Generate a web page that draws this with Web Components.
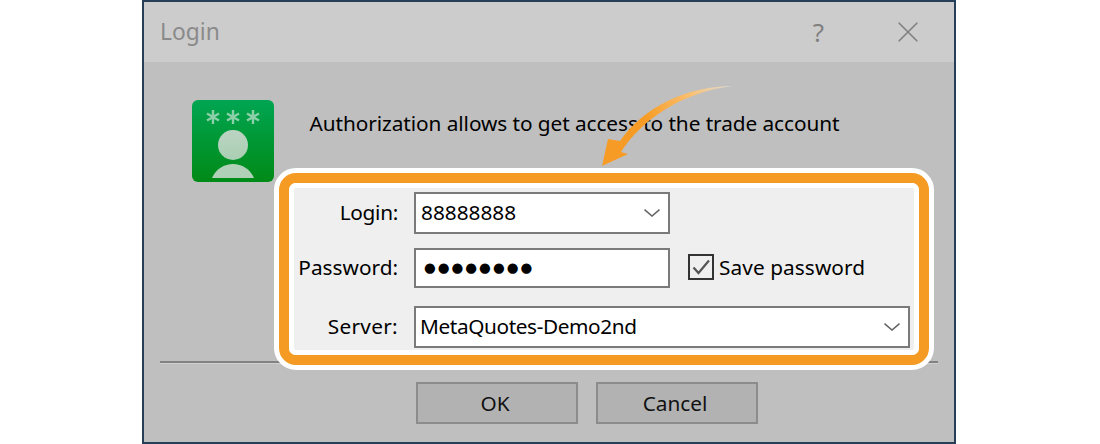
<!DOCTYPE html>
<html><head><meta charset="utf-8"><style>
html,body{margin:0;padding:0;background:#fff}
body{width:1100px;height:444px;overflow:hidden;padding-left:142px;box-sizing:border-box;font-family:"Noto Sans","Open Sans",sans-serif;font-size:20.8px;color:#000}
</style></head><body>
<login-dialog>
  <title-bar slot="title" caption="Login"></title-bar>
  <user-icon slot="icon"></user-icon>
  <span slot="message">Authorization allows to get access to the trade account</span>
  <callout-box slot="form">
    <field-row label="Login:" style="--ls:-.3px"><combo-box value="88888888" style="width:256px"></combo-box></field-row>
    <field-row label="Password:" style="margin-top:14px"><password-box count="8"></password-box><check-field>Save password</check-field></field-row>
    <field-row label="Server:" style="margin-top:18px;--ls:.3px"><combo-box value="MetaQuotes-Demo2nd" tight style="width:496px"></combo-box></field-row>
  </callout-box>
  <dlg-button slot="buttons">OK</dlg-button>
  <dlg-button slot="buttons">Cancel</dlg-button>
</login-dialog>
<script>
function def(name, html, init){
  customElements.define(name, class extends HTMLElement{
    connectedCallback(){
      if(this.shadowRoot) return;
      const r=this.attachShadow({mode:'open'});
      r.innerHTML=html;
      if(init) init(this,r);
    }
  });
}
const chev='<svg width="16" height="8" viewBox="0 0 16 8" style="display:block"><path d="M.5.7 8 7 15.500.7" fill="none" stroke="#666" stroke-width="1.6"/></svg>';
def('login-dialog',`<style>
:host{display:block;position:relative;width:814px;height:444px;box-sizing:border-box;border:2px solid #243f57;background:#bfbfbf}
.top{display:flex;padding:38px 0 0 48px;gap:35.500px;height:82px}
.msg{line-height:46px;height:46px;letter-spacing:-.07px}
.form{display:block;margin:-14px 0 -9px 130px;position:relative;z-index:1;width:660px}
.rule{margin:0 16px 0 16px;height:2px;background:#828282;border-bottom:1px solid #cfcfcf}
.btns{display:flex;gap:18px;margin:18px 0 0 272px}
.arrow{position:absolute;left:456px;top:78px;z-index:2;display:block}
</style>
<slot name="title"></slot>
<div class="top"><slot name="icon"></slot><div class="msg"><slot name="message"></slot></div></div>
<div class="form"><slot name="form"></slot></div>
<div class="rule"></div>
<div class="btns"><slot name="buttons"></slot></div>
<svg class="arrow" width="140" height="90" viewBox="600 80 140 90">
<defs><linearGradient id="ag" gradientUnits="userSpaceOnUse" x1="645" y1="118" x2="733" y2="86"><stop offset="0" stop-color="#f69c26"/><stop offset=".55" stop-color="#fac070"/><stop offset="1" stop-color="#f5e6cf" stop-opacity=".6"/></linearGradient></defs>
<path d="M733 86C690 86 645 105 620 141L608 139 602 166 628 154 621 152C640 122 680 92 733 86Z" fill="url(#ag)"/>
</svg>`);
def('title-bar',`<style>
:host{display:flex;align-items:center;height:60px;background:#ccc;color:#8a8a8a;padding-left:16px;box-sizing:border-box}
.c{flex:1;font-size:22.8px;line-height:60px;height:60px}
.q{font-size:26px;line-height:1;color:#808080;margin-right:74px}
svg{display:block;margin-right:36px}
</style><div class="c"></div><div class="q">?</div><svg width="20" height="20" viewBox="0 0 20 20"><path d="M.7.7 19.3 19.3M19.3.7.7 19.3" stroke="#808080" stroke-width="1.6" fill="none"/></svg>`,
(h,r)=>{r.querySelector('.c').textContent=h.getAttribute('caption')});
def('user-icon',`<style>:host{display:block;width:82px;height:82px}svg{display:block}</style>
<svg width="82" height="82" viewBox="0 0 82 82"><defs>
<linearGradient id="g" x1="0" y1="0" x2="0" y2="1"><stop offset="0" stop-color="#00a552"/><stop offset="1" stop-color="#008a17"/></linearGradient>
<linearGradient id="p" x1="0" y1="0" x2="0" y2="1"><stop offset="0" stop-color="#bcd3c3"/><stop offset="1" stop-color="#a9cfb2"/></linearGradient>
</defs>
<rect width="82" height="82" rx="6" fill="url(#g)"/>
<g stroke="#8ccfa8" stroke-width="2.4" fill="none">
<path d="M21 10v14M15 13.500l12 7M27 13.500l-12 7"/>
<path d="M41 10v14M35 13.500l12 7M47 13.500l-12 7"/>
<path d="M61 10v14M55 13.500l12 7M67 13.500l-12 7"/>
</g>
<circle cx="41" cy="45" r="15" fill="url(#p)"/>
<path d="M20 78C24 69 32 64 41 64S58 69 62 78Z" fill="#b0d1b8"/>
</svg>`);
def('callout-box',`<style>
:host{display:block;box-sizing:border-box;width:660px;height:202px;border:5px solid #fff;border-radius:22px;background:#fff}
.o{box-sizing:border-box;height:100%;border:10px solid #f59b23;border-radius:17px;background:#fff}
.w{box-sizing:border-box;height:100%;border:5px solid #fff;border-radius:7px;background:#fff}
.g{box-sizing:border-box;height:100%;background:#efefef;border-radius:2px;padding-top:4px}
</style><div class="o"><div class="w"><div class="g"><slot></slot></div></div></div>`);
def('field-row',`<style>
:host{display:grid;grid-template-columns:104px 1fr;column-gap:16px;align-items:center}
.l{text-align:right;margin-top:-2px;letter-spacing:var(--ls,0)}.f{display:flex;align-items:center}
</style><div class="l"></div><div class="f"><slot></slot></div>`,
(h,r)=>{r.querySelector('.l').textContent=h.getAttribute('label')});
def('combo-box',`<style>
:host{display:flex;align-items:center;justify-content:space-between;box-sizing:border-box;height:42px;border:2px solid #7a7a7a;background:#fff;padding:0 8px 0 5px}
.v{margin-top:-2px}
:host([tight]) .v{letter-spacing:-.4px;margin-left:-1px}
</style><span class="v"></span>${chev}`,
(h,r)=>{r.querySelector('.v').textContent=h.getAttribute('value')});
def('password-box',`<style>
:host{display:flex;align-items:center;box-sizing:border-box;width:256px;height:40px;border:2px solid #7a7a7a;background:#fff;padding-left:8px}
.d{font-family:"DejaVu Sans",sans-serif;font-size:13.500px;letter-spacing:2px;line-height:1;color:#000}
</style><span class="d"></span>`,
(h,r)=>{r.querySelector('.d').textContent='\u25CF'.repeat(+h.getAttribute('count'))});
def('check-field',`<style>
:host{display:flex;align-items:center;gap:5px;margin-left:18px}
.b{box-sizing:border-box;width:26px;height:26px;border:2px solid #333;display:block;margin-top:-2px}
svg{display:block}
span{margin-top:-2px;letter-spacing:.08px}
</style><div class="b"><svg width="22" height="22" viewBox="0 0 22 22"><path d="M3.500 11.500 8.500 17 19 4.500" fill="none" stroke="#555" stroke-width="2.200"/></svg></div><span><slot></slot></span>`);
def('dlg-button',`<style>
:host{display:flex;align-items:center;justify-content:center;box-sizing:border-box;width:162px;height:42px;border:2px solid #8c8c8c;background:#b2b2b2;color:#111;padding-right:4px;padding-bottom:1px}
</style><slot></slot>`);
</script>
</body></html>
